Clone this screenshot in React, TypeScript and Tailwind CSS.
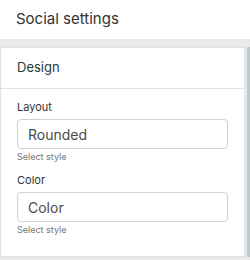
import React from 'react';

const font = { fontFamily: 'Inter, "Open Sans", sans-serif' };

function Field({ label, value }: { label: string; value: string }) {
  return (
    <div className="flex flex-col">
      <label className="text-[11px] leading-[14px] text-[#333333]">{label}</label>
      <div className="mt-[5px] h-[30px] w-[211px] rounded-[4px] border border-[#cfd3d6] bg-white px-[10px] flex items-center text-[14px] text-[#4a4a4a]">
        {value}
      </div>
      <span className="mt-[2px] text-[9px] leading-[12px] text-[#777777]">Select style</span>
    </div>
  );
}

export default function App() {
  return (
    <div className="w-[250px] h-[260px] bg-white flex flex-col" style={font}>
      <div className="h-[39px] px-4 flex items-center text-[15px] text-[#333333]">Social settings</div>
      <div className="flex-1 bg-[#e9e9e9] flex pt-2 pb-[3px]">
        <div className="w-[245px] bg-white border border-[#dfe3e3] flex flex-col">
          <div className="h-[41px] px-4 flex items-center border-b border-[#dde5e5] text-[13px] text-[#1e3b3b]">Design</div>
          <div className="px-4 pt-[11px] flex flex-col gap-[10px]">
            <Field label="Layout" value="Rounded" />
            <Field label="Color" value="Color" />
          </div>
        </div>
        <div className="ml-[2px] w-[3px] bg-[#b9cbcb]" />
      </div>
    </div>
  );
}
